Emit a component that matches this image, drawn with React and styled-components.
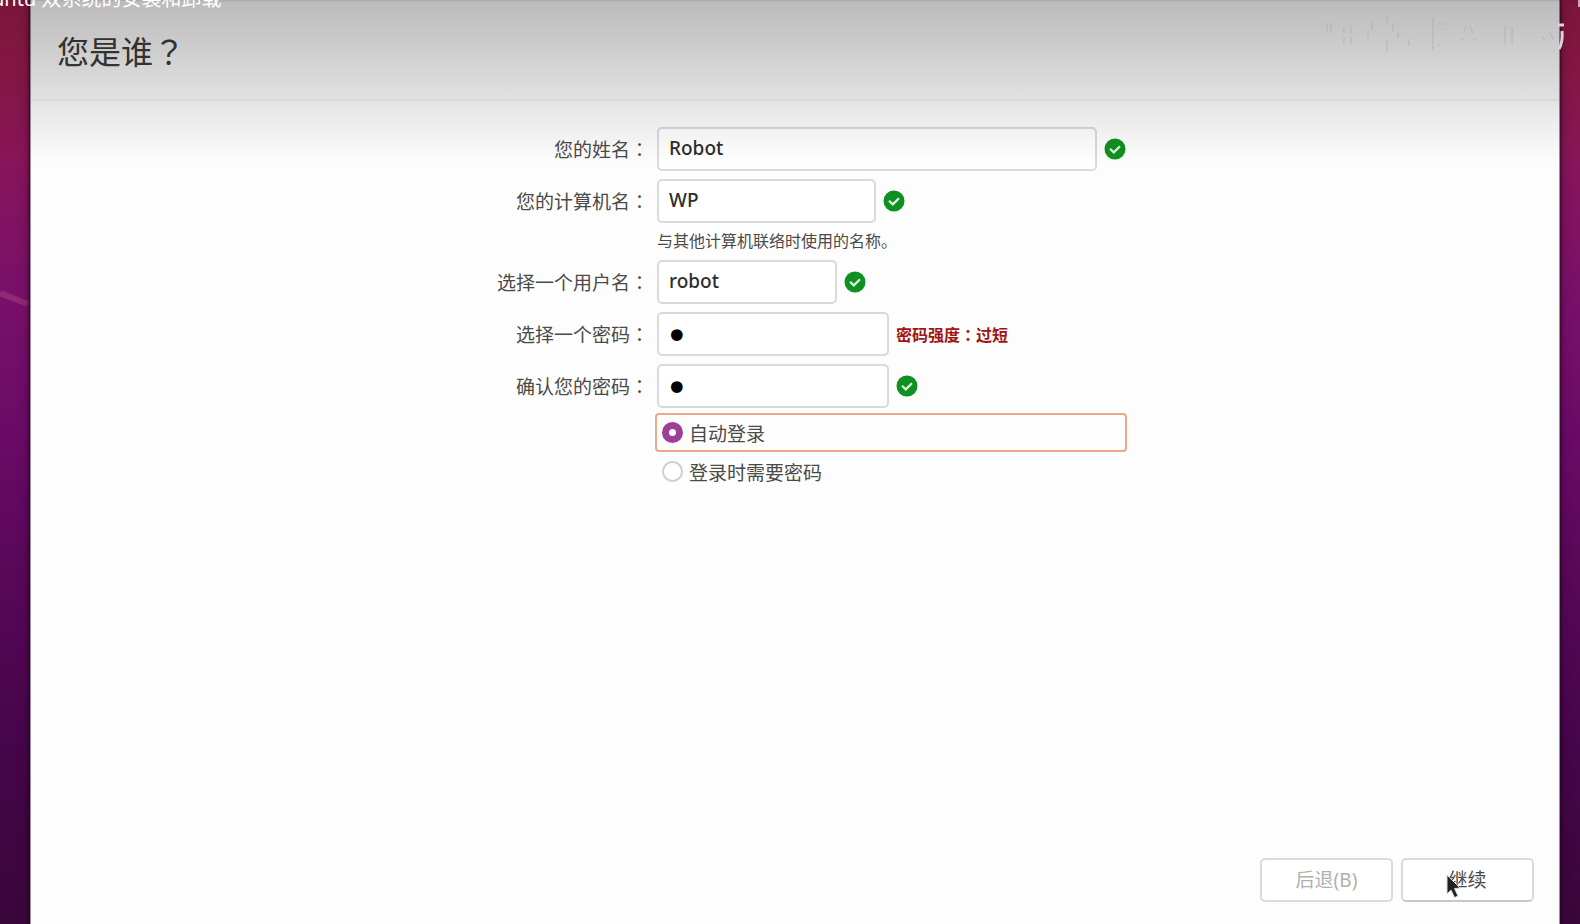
import React, {useState} from 'react';
import styled, {createGlobalStyle} from 'styled-components';

const GlobalStyle = createGlobalStyle`
    * {
        box-sizing: border-box;
    }
    body {
        margin: 0;
        font-family: "Noto Sans", "Noto Sans CJK SC", sans-serif;
        font-size: 19px;
        line-height: 28px;
        color: #4a4a48;
    }
`;

const Desktop = styled.div`
    position: relative;
    display: flex;
    min-height: 100vh;
    padding: 0 20px 0 30px;
    overflow: hidden;
    background: linear-gradient(
        #a51e4c 0,
        #981a4e 8%,
        #85145c 19%,
        #78106a 33%,
        #6a0a66 48%,
        #580859 62%,
        #47054b 80%,
        #3a073a 100%
    );
`;

const Streak = styled.svg`
    position: absolute;
    left: 0;
    top: 286px;
    width: 30px;
    height: 24px;
`;

const Installer = styled.main`
    position: relative;
    flex: 1;
    display: flex;
    flex-direction: column;
    background: #fdfdfd;
    border: solid #9a919a;
    border-width: 0 1px;
    box-shadow: 0 0 3px 1px rgba(25, 0, 25, 0.7), 0 0 12px rgba(25, 0, 25, 0.3);
`;

const Header = styled.header`
    padding: 28px 26px 25px;
    border-bottom: 2px solid #f0efef;
    background: #fafafa;
`;

const Title = styled.h1`
    margin: 0;
    font-size: 32px;
    line-height: 44px;
    font-weight: 400;
    color: #3c3c3a;
`;

const Form = styled.form`
    flex: 1;
    display: flex;
    flex-direction: column;
`;

const Fields = styled.div`
    flex: 1;
    display: grid;
    grid-template-columns: 186px 1fr;
    align-content: start;
    align-items: center;
    gap: 8px;
    width: 100%;
    max-width: 664px;
    margin: 0 auto;
    padding-top: 26px;
`;

const Label = styled.label`
    text-align: right;
    white-space: nowrap;
`;

// full-width punctuation sits centred in its cell in this face
const Mark = styled.span`
    font-family: "Noto Sans CJK TC", sans-serif;
`;

const Field = styled.div`
    display: flex;
    align-items: center;
    gap: 7px;
    padding-right: 1px;
`;

const Input = styled.input`
    flex: ${props => props.$width ? `0 0 ${props.$width}` : '1'};
    min-width: 0;
    height: 44px;
    padding: 0 10px 2px;
    border: 2px solid #dadada;
    border-radius: 5px;
    background: #fff;
    font: inherit;
    font-weight: 500;
    color: #2e2e2c;
    outline: none;
`;

const PasswordInput = styled(Input)`
    padding: 4px 6px 0;
    font-family: "DejaVu Sans", sans-serif;
    font-size: 40px;
    font-weight: 400;
    color: #000;
`;

const Hint = styled.p`
    grid-column: 2;
    margin: 0;
    font-size: 16px;
    line-height: 21px;
`;

const Warning = styled.strong`
    font-size: 16px;
    font-weight: 700;
    color: #a01414;
`;

const CheckIcon = styled.svg`
    flex: none;
    width: 22px;
    height: 22px;
`;

const LoginOptions = styled.div`
    grid-column: 2;
    margin: -3px 0 0 -2px;
`;

const Option = styled.label`
    display: flex;
    align-items: center;
    gap: 6px;
    height: 39px;
    padding: 0 5px;
    border: 2px solid ${props => props.$active ? '#eaa989' : 'transparent'};
    border-radius: 4px;
`;

const OptionText = styled.span`
    padding-top: 3px;
`;

const Radio = styled.input`
    appearance: none;
    width: 21px;
    height: 21px;
    margin: 0;
    border: 2px solid #cfcfcf;
    border-radius: 50%;
    background: #fff;
    &:checked {
        border: 7px solid #9c4097;
    }
`;

const Footer = styled.footer`
    display: flex;
    justify-content: flex-end;
    gap: 8px;
    padding: 0 25px 22px;
`;

const Button = styled.button`
    width: 133px;
    height: 44px;
    padding: 0;
    border: 2px solid #dadada;
    border-bottom-color: ${props => props.disabled ? '#dadada' : '#c8c8c8'};
    border-radius: 5px;
    background: #fff;
    font: inherit;
    color: ${props => props.disabled ? '#b0b0ac' : '#4a4a48'};
`;

const Shade = styled.div`
    position: absolute;
    inset: 0 0 auto 0;
    height: 165px;
    background: linear-gradient(
        rgba(0, 0, 0, 0.32) 0,
        rgba(0, 0, 0, 0.25) 2px,
        rgba(0, 0, 0, 0.1) 60%,
        rgba(0, 0, 0, 0)
    );
    pointer-events: none;
`;

const VideoTitle = styled.div`
    position: absolute;
    left: -35px;
    top: -15px;
    font-size: 20px;
    white-space: nowrap;
    color: #fff;
    pointer-events: none;
`;

const Watermark = styled.svg`
    position: absolute;
    right: 0;
    top: 0;
    width: 260px;
    height: 60px;
    fill: none;
    pointer-events: none;
`;

const Pointer = styled.svg`
    position: absolute;
    right: 118px;
    bottom: 24px;
    width: 16px;
    height: 26px;
    pointer-events: none;
`;

const Check = () => (
    <CheckIcon viewBox="0 0 22 22" role="img" aria-label="OK">
        <circle cx="11" cy="11" r="10.5" fill="#0e9120"/>
        <path d="M6 10.8 L9.8 14.4 L16 8.2" fill="none" stroke="#dff5df" strokeWidth="2.2"/>
    </CheckIcon>
);

const FieldLabel = ({id, children}) => (
    <Label htmlFor={id}>{children}<Mark>：</Mark></Label>
);

const App = () => {
    const [values, setValues] = useState({
        name: 'Robot',
        host: 'WP',
        user: 'robot',
        password: '1',
        confirm: '1',
    });
    const [login, setLogin] = useState('auto');

    const bind = key => ({
        id: key,
        name: key,
        value: values[key],
        onChange: e => setValues({...values, [key]: e.target.value}),
    });

    return (
        <Desktop>
            <GlobalStyle/>
            <Streak viewBox="0 0 30 24">
                <path d="M0 7 L28 18" stroke="#a03a80" strokeOpacity="0.6" strokeWidth="6"/>
            </Streak>
            <Installer>
                <Header>
                    <Title>您是谁<Mark>？</Mark></Title>
                </Header>
                <Form onSubmit={e => e.preventDefault()}>
                    <Fields>
                        <FieldLabel id="name">您的姓名</FieldLabel>
                        <Field>
                            <Input type="text" {...bind('name')}/>
                            <Check/>
                        </Field>
                        <FieldLabel id="host">您的计算机名</FieldLabel>
                        <Field>
                            <Input type="text" $width="219px" {...bind('host')}/>
                            <Check/>
                        </Field>
                        <Hint>与其他计算机联络时使用的名称。</Hint>
                        <FieldLabel id="user">选择一个用户名</FieldLabel>
                        <Field>
                            <Input type="text" $width="180px" {...bind('user')}/>
                            <Check/>
                        </Field>
                        <FieldLabel id="password">选择一个密码</FieldLabel>
                        <Field>
                            <PasswordInput type="password" $width="232px" {...bind('password')}/>
                            <Warning>密码强度<Mark>：</Mark>过短</Warning>
                        </Field>
                        <FieldLabel id="confirm">确认您的密码</FieldLabel>
                        <Field>
                            <PasswordInput type="password" $width="232px" {...bind('confirm')}/>
                            <Check/>
                        </Field>
                        <LoginOptions>
                            <Option $active={login === 'auto'}>
                                <Radio type="radio" name="login" checked={login === 'auto'}
                                       onChange={() => setLogin('auto')}/>
                                <OptionText>自动登录</OptionText>
                            </Option>
                            <Option $active={login === 'ask'}>
                                <Radio type="radio" name="login" checked={login === 'ask'}
                                       onChange={() => setLogin('ask')}/>
                                <OptionText>登录时需要密码</OptionText>
                            </Option>
                        </LoginOptions>
                    </Fields>
                    <Footer>
                        <Button type="button" disabled>后退(B)</Button>
                        <Button type="submit">继续</Button>
                    </Footer>
                </Form>
            </Installer>
            <Shade/>
            <VideoTitle>Ubuntu 双系统的安装和卸载</VideoTitle>
            <Watermark viewBox="0 0 260 60">
                <path
                    d="M7 23v9M11 23v10M24 27v6M31 27v6M24 37v7M31 37v7M48 30v9M52 22v8M67 17v7M67 40v12M73 23v8M78 32v6M113 18v32M118 24h3M123 24h3M118 45h3"
                    stroke="#a4a4a4" strokeOpacity="0.3" strokeWidth="2"/>
                <path
                    d="M89 39v7M147 17v2M146 26l-2 6M150 26l3 7M143 38l-1 3M155 38l1 3M185 27v18M192 27v18M207 43h2M222 36l3 5M230 32l3 7"
                    stroke="#a0a0a0" strokeOpacity="0.5"/>
                <path d="M238 25h6M242 31Q243 42 239 49" stroke="#dcd6da" strokeWidth="3"/>
                <path d="M259 0v7" stroke="#c9a3b5" strokeWidth="2"/>
            </Watermark>
            <Pointer viewBox="0 0 16 26">
                <path d="M1 1 V20 L5 16 L8.5 23.5 L12 22 L8.5 14.5 L14 14 Z" fill="#222" stroke="#ddd" strokeWidth="1"/>
            </Pointer>
        </Desktop>
    );
};

export default App;
